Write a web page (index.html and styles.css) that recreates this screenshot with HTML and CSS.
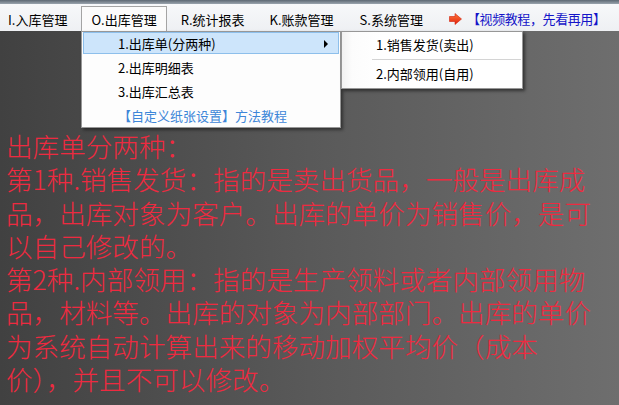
FILE: index.html
```html
<!DOCTYPE html>
<html lang="zh">
<head>
<meta charset="utf-8">
<title>出库管理</title>
<link rel="stylesheet" href="styles.css">
</head>
<body>
<div class="app">
  <div class="topstrip"></div>
  <nav class="menubar">
    <span class="menu-item">I.入库管理</span>
    <span class="menu-item active">O.出库管理</span>
    <span class="menu-item">R.统计报表</span>
    <span class="menu-item">K.账款管理</span>
    <span class="menu-item">S.系统管理</span>
    <span class="video-link">
      <svg class="arrow-icon" width="13" height="12" viewBox="0 0 13 12">
        <defs>
          <linearGradient id="ag" x1="0" y1="0" x2="0" y2="1">
            <stop offset="0" stop-color="#ff7a3a"/>
            <stop offset="1" stop-color="#e2200c"/>
          </linearGradient>
        </defs>
        <path d="M0.5 3.5 H6 V0.5 L12.5 6 L6 11.5 V8.5 H0.5 Z" fill="url(#ag)" stroke="#d0200c" stroke-width="0.6"/>
      </svg>
      <span class="video-text">【视频教程，先看再用】</span>
    </span>
  </nav>

  <div class="dropdown">
    <div class="dd-item hl">1.出库单(分两种)<span class="sub-arrow"></span></div>
    <div class="dd-item">2.出库明细表</div>
    <div class="dd-item">3.出库汇总表</div>
    <div class="dd-item link">【自定义纸张设置】方法教程</div>
  </div>

  <div class="submenu">
    <div class="sm-item">1.销售发货(卖出)</div>
    <div class="sm-sep"></div>
    <div class="sm-item">2.内部领用(自用)</div>
  </div>

  <div class="content">
    <p class="note">出库单分两种：<br>第1种.销售发货：指的是卖出货品，一般是出库成<br>品，出库对象为客户。出库的单价为销售价，是可<br>以自己修改的。<br>第2种.内部领用：指的是生产领料或者内部领用物<br>品，材料等。出库的对象为内部部门。出库的单价<br>为系统自动计算出来的移动加权平均价（成本<br>价），并且不可以修改。</p>
  </div>
</div>
</body>
</html>
```

FILE: styles.css
```css
html, body {
  margin: 0;
  padding: 0;
}
body {
  width: 619px;
  height: 405px;
  overflow: hidden;
  font-family: "Noto Sans CJK SC", "Noto Sans", sans-serif;
}
.app {
  position: relative;
  width: 619px;
  height: 405px;
  overflow: hidden;
  background: linear-gradient(to right, #414141 0%, #595959 50%, #6e6e6e 100%);
}
.topstrip {
  height: 4px;
  background: linear-gradient(to bottom, #5d6873, #9aa4ae);
}
.menubar {
  height: 27px;
  display: flex;
  align-items: stretch;
  background: linear-gradient(to bottom, #f7f8fa, #eef0f3);
  font-size: 13px;
  color: #000;
  margin-left: -4px;
}
.menu-item {
  display: flex;
  align-items: center;
  padding: 0 11px;
  border: 1px solid transparent;
  border-bottom: none;
  margin-top: 2px;
  white-space: nowrap;
}
.menu-item:nth-child(n+4) {
  padding: 0 12px;
}
.menu-item.active {
  background: #fbfbfb;
  border-color: #a4a4a4;
  padding: 0 9px;
  margin: 2px 2px 0 2px;
}
.video-link {
  display: flex;
  align-items: center;
  margin-left: 13px;
  margin-top: 2px;
  gap: 5px;
}
.arrow-icon {
  display: block;
}
.video-text {
  color: #1414c8;
  white-space: nowrap;
  letter-spacing: -0.4px;
}

.dropdown {
  position: absolute;
  left: 81px;
  top: 31px;
  width: 258px;
  height: 95px;
  background: #fdfdfd;
  border: 1px solid #979797;
  box-shadow: 2px 2px 3px rgba(0, 0, 0, 0.45);
  font-size: 13px;
  color: #000;
}
.dd-item {
  position: relative;
  height: 22px;
  line-height: 22px;
  margin: 0 1px 2px 1px;
  padding-left: 34px;
  border: 1px solid transparent;
  box-sizing: border-box;
  white-space: nowrap;
}
.dd-item.hl {
  background: #cde5fb;
  border-color: #8dbfeb;
}
.dd-item.link {
  color: #3d86d8;
}
.sub-arrow {
  position: absolute;
  right: 10px;
  top: 7px;
  width: 0;
  height: 0;
  border-top: 4px solid transparent;
  border-bottom: 4px solid transparent;
  border-left: 4px solid #000;
}

.submenu {
  position: absolute;
  left: 341px;
  top: 31px;
  width: 180px;
  height: 55px;
  background: linear-gradient(to right, #f1f1f1 0px, #fcfcfc 10px, #ffffff 40px);
  border: 1px solid #979797;
  box-shadow: 2px 2px 3px rgba(0, 0, 0, 0.5);
  font-size: 13px;
  color: #000;
  padding-top: 1px;
}
.sm-item {
  height: 24px;
  line-height: 24px;
  padding-left: 34px;
  white-space: nowrap;
}
.sm-sep {
  height: 1px;
  background: #d4d4d4;
  margin: 2px 1px 2px 30px;
}

.content {
  padding: 98px 0 0 6px;
}
.note {
  margin: 0;
  color: #ee2a40;
  font-size: 26.6px;
  line-height: 33.3px;
  font-weight: 300;
  white-space: nowrap;
}
```
